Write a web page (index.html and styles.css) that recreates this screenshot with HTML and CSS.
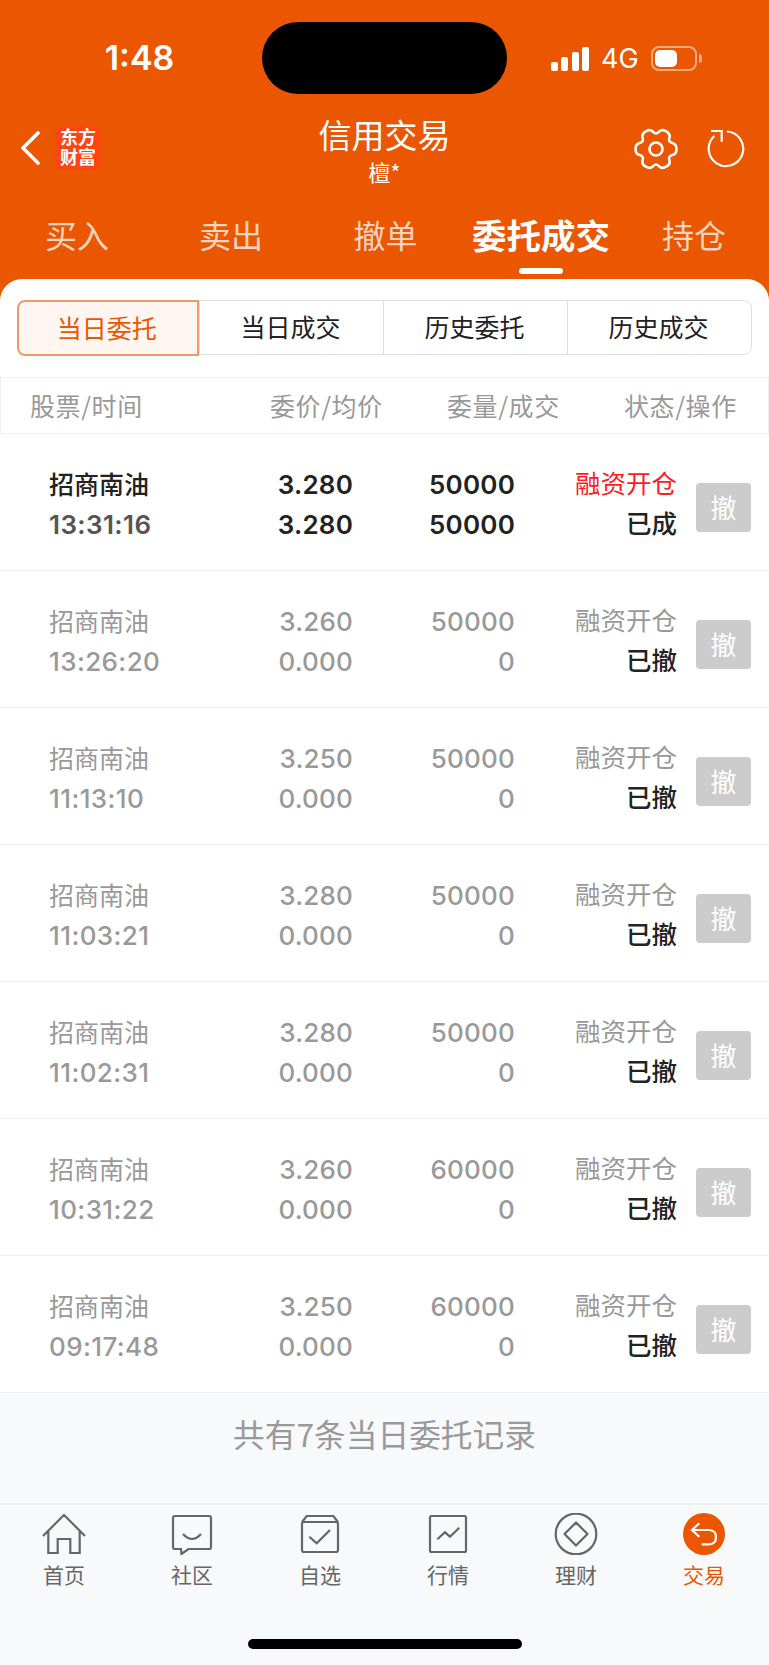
FILE: index.html
```html
<!DOCTYPE html>
<html lang="zh-CN">
<head>
    <meta charset="UTF-8">
    <title>信用交易</title>
    <link rel="stylesheet" href="styles.css">
</head>
<body>
    <div class="top">
        <div class="status">
            <div class="clock">1:48</div>
            <div class="island"></div>
            <div class="status-right">
                <svg class="signal" width="38" height="24" viewBox="0 0 38 24"><rect x="0" y="15" width="7" height="9" rx="2"/><rect x="10" y="10" width="7" height="14" rx="2"/><rect x="21" y="5" width="7" height="19" rx="2"/><rect x="31" y="0" width="7" height="24" rx="2"/></svg>
                <span class="net">4G</span>
                <div class="battery"><div class="battery-fill"></div></div>
                <div class="battery-tip"></div>
            </div>
        </div>

        <div class="titlebar">
            <div class="title-left">
                <svg width="20" height="34" viewBox="0 0 20 34"><path d="M18 2 L3 17 L18 32" fill="none" stroke="#fff" stroke-width="3.6" stroke-linecap="round" stroke-linejoin="round"/></svg>
                <div class="logo"><div>东方</div><div>财富</div></div>
            </div>
            <div class="title-mid">
                <div class="title">信用交易</div>
                <div class="subtitle">檀*</div>
            </div>
            <div class="title-right">
                <svg width="44" height="42" viewBox="-22 -21 44 42" fill="none" stroke="#fff" stroke-width="2.6"><path d="M20.47 0 Q20.47 5.1 16.3 6.05 Q12.12 7 13.39 11.09 Q14.66 15.18 10.24 17.73 Q5.82 20.28 2.91 17.14 Q0 14 -2.91 17.14 Q-5.82 20.28 -10.24 17.73 Q-14.66 15.18 -13.39 11.09 Q-12.12 7 -16.3 6.05 Q-20.47 5.1 -20.47 0 Q-20.47 -5.1 -16.3 -6.05 Q-12.12 -7 -13.39 -11.09 Q-14.66 -15.18 -10.24 -17.73 Q-5.82 -20.28 -2.91 -17.14 Q0 -14 2.91 -17.14 Q5.82 -20.28 10.24 -17.73 Q14.66 -15.18 13.39 -11.09 Q12.12 -7 16.3 -6.05 Q20.47 -5.1 20.47 0 Z"/><circle cx="0" cy="0" r="6.5"/></svg>
                <svg width="40" height="40" viewBox="0 0 40 40" fill="none" stroke="#fff" stroke-width="2.2"><path d="M20 3.5 A17.3 17.3 0 1 1 7.3 8"/><path d="M4 3 H14.7 V13.7"/></svg>
            </div>
        </div>

        <div class="tabs">
            <div class="tab">买入</div>
            <div class="tab">卖出</div>
            <div class="tab">撤单</div>
            <div class="tab active">委托成交</div>
            <div class="tab">持仓</div>
        </div>
    </div>

    <div class="sheet">
        <div class="segments">
            <div class="segment on">当日委托</div>
            <div class="segment">当日成交</div>
            <div class="segment">历史委托</div>
            <div class="segment">历史成交</div>
        </div>

        <div class="table-head">
            <div>股票/时间</div>
            <div>委价/均价</div>
            <div>委量/成交</div>
            <div>状态/操作</div>
        </div>

        <div class="row done">
            <div class="stock"><div class="name">招商南油</div><div class="time">13:31:16</div></div>
            <div class="num"><div>3.280</div><div>3.280</div></div>
            <div class="num"><div>50000</div><div>50000</div></div>
            <div class="state"><div class="kind">融资开仓</div><div class="result">已成</div></div>
            <div class="cancel">撤</div>
        </div>
        <div class="row">
            <div class="stock"><div class="name">招商南油</div><div class="time">13:26:20</div></div>
            <div class="num"><div>3.260</div><div>0.000</div></div>
            <div class="num"><div>50000</div><div>0</div></div>
            <div class="state"><div class="kind">融资开仓</div><div class="result">已撤</div></div>
            <div class="cancel">撤</div>
        </div>
        <div class="row">
            <div class="stock"><div class="name">招商南油</div><div class="time">11:13:10</div></div>
            <div class="num"><div>3.250</div><div>0.000</div></div>
            <div class="num"><div>50000</div><div>0</div></div>
            <div class="state"><div class="kind">融资开仓</div><div class="result">已撤</div></div>
            <div class="cancel">撤</div>
        </div>
        <div class="row">
            <div class="stock"><div class="name">招商南油</div><div class="time">11:03:21</div></div>
            <div class="num"><div>3.280</div><div>0.000</div></div>
            <div class="num"><div>50000</div><div>0</div></div>
            <div class="state"><div class="kind">融资开仓</div><div class="result">已撤</div></div>
            <div class="cancel">撤</div>
        </div>
        <div class="row">
            <div class="stock"><div class="name">招商南油</div><div class="time">11:02:31</div></div>
            <div class="num"><div>3.280</div><div>0.000</div></div>
            <div class="num"><div>50000</div><div>0</div></div>
            <div class="state"><div class="kind">融资开仓</div><div class="result">已撤</div></div>
            <div class="cancel">撤</div>
        </div>
        <div class="row">
            <div class="stock"><div class="name">招商南油</div><div class="time">10:31:22</div></div>
            <div class="num"><div>3.260</div><div>0.000</div></div>
            <div class="num"><div>60000</div><div>0</div></div>
            <div class="state"><div class="kind">融资开仓</div><div class="result">已撤</div></div>
            <div class="cancel">撤</div>
        </div>
        <div class="row">
            <div class="stock"><div class="name">招商南油</div><div class="time">09:17:48</div></div>
            <div class="num"><div>3.250</div><div>0.000</div></div>
            <div class="num"><div>60000</div><div>0</div></div>
            <div class="state"><div class="kind">融资开仓</div><div class="result">已撤</div></div>
            <div class="cancel">撤</div>
        </div>

        <div class="summary">共有7条当日委托记录</div>
    </div>

    <div class="nav">
        <div class="nav-item">
            <svg width="44" height="42" viewBox="0 0 44 42"><path d="M1 23 L22 2 L43 23 M6.3 18 V40 H15.7 V26 H28.3 V40 H37.7 V18"/></svg>
            <span>首页</span>
        </div>
        <div class="nav-item">
            <svg width="44" height="42" viewBox="0 0 44 42"><path d="M5 3 H39 Q41 3 41 5 V34 Q41 36 39 36 H18.5 L11.5 41 L11 36 H5 Q3 36 3 34 V5 Q3 3 5 3 Z"/><path d="M13 21 Q22 31 31 21"/></svg>
            <span>社区</span>
        </div>
        <div class="nav-item">
            <svg width="44" height="42" viewBox="0 0 44 42"><path d="M4 9 L8.7 3 H35.3 L40 9"/><rect x="4" y="9" width="36" height="30" rx="2"/><path d="M11.3 23.7 L18.7 30.3 L32 17"/></svg>
            <span>自选</span>
        </div>
        <div class="nav-item">
            <svg width="44" height="42" viewBox="0 0 44 42"><rect x="4" y="3" width="36" height="36" rx="1.5"/><path d="M11.3 26.3 L19 19.3 L24 23.7 L33.3 14.7"/></svg>
            <span>行情</span>
        </div>
        <div class="nav-item">
            <svg width="44" height="42" viewBox="0 0 44 42"><circle cx="22" cy="21" r="20.3"/><path d="M22 9.5 L33.5 21 L22 32.5 L10.5 21 Z" stroke-linejoin="round"/></svg>
            <span>理财</span>
        </div>
        <div class="nav-item current">
            <svg width="44" height="42" viewBox="0 0 44 42"><circle class="fill" cx="22" cy="21" r="21"/><path class="white" d="M17.3 10.3 L10 17 L17.3 23.7 M10 17 H27 Q34 17.3 34 24 Q34 31.3 27 31.3 H19.7"/></svg>
            <span>交易</span>
        </div>
        <div class="home-bar"></div>
    </div>
</body>
</html>
```

FILE: styles.css
```css
* {
    box-sizing: border-box;
}

body {
    margin: 0;
    width: 769px;
    height: 1665px;
    overflow: hidden;
    background: #f8f9fb;
    font-family: "Noto Sans CJK SC", sans-serif;
    display: flex;
    flex-direction: column;
}

.top {
    background: #eb5600;
    color: #fff;
    height: 299px;
    flex: none;
}

.status {
    height: 110px;
    padding-top: 22px;
    display: grid;
    grid-template-columns: 262px 245px 262px;
}

.clock {
    height: 72px;
    line-height: 72px;
    font-family: Inter, sans-serif;
    font-size: 34px;
    font-weight: 600;
    text-align: center;
    padding-left: 17px;
}

.island {
    height: 72px;
    background: #000;
    border-radius: 36px;
}

.status-right {
    height: 72px;
    padding: 1px 0 0 44px;
    display: flex;
    align-items: center;
}

.signal {
    fill: #fff;
    flex: none;
}

.net {
    font-family: Inter, sans-serif;
    font-size: 27px;
    margin-left: 12px;
    width: 50px;
}

.battery {
    width: 46px;
    height: 25px;
    border: 2px solid rgba(255, 255, 255, 0.5);
    border-radius: 8px;
    padding: 2px;
}

.battery-fill {
    width: 22px;
    height: 17px;
    background: #fff;
    border-radius: 5px;
}

.battery-tip {
    width: 3px;
    height: 9px;
    margin-left: 2px;
    background: rgba(255, 255, 255, 0.5);
    border-radius: 0 3px 3px 0;
}

.titlebar {
    height: 85px;
    display: grid;
    grid-template-columns: 1fr 200px 1fr;
}

.title-left {
    display: flex;
    align-items: center;
    padding: 0 0 10px 20px;
    gap: 15px;
}

.logo {
    width: 46px;
    height: 45px;
    background: #ff4510;
    border-radius: 8px;
    font-size: 18px;
    font-weight: 700;
    line-height: 20px;
    text-align: center;
    padding-top: 1px;
    white-space: nowrap;
}

.title-mid {
    text-align: center;
}

.title {
    font-size: 33px;
    line-height: 42px;
    margin-top: 3px;
}

.subtitle {
    font-size: 22px;
    line-height: 30px;
    margin-top: 1px;
}

.title-right {
    display: flex;
    justify-content: flex-end;
    align-items: flex-start;
    gap: 29px;
    padding: 18px 22px 0 0;
}

.tabs {
    height: 104px;
    display: grid;
    grid-template-columns: 154px 154px 155px 156px 150px;
}

.tab {
    position: relative;
    height: 84px;
    text-align: center;
    font-size: 32px;
    line-height: 78px;
    color: rgba(255, 255, 255, 0.75);
}

.tab.active {
    color: #fff;
    font-size: 34.5px;
    font-weight: 700;
}

.tab.active::after {
    content: "";
    position: absolute;
    left: 50%;
    bottom: 5px;
    width: 44px;
    height: 6px;
    margin-left: -22px;
    background: #fff;
    border-radius: 3px;
}

.sheet {
    background: #fff;
    border-radius: 22px 22px 0 0;
    margin-top: -20px;
    padding-top: 21px;
    height: 1224px;
    flex: none;
    position: relative;
}

.segments {
    margin: 0 17px;
    height: 55px;
    display: grid;
    grid-template-columns: 181px 184px 184px 1fr;
    border: 1.5px solid #dfe0e6;
    border-radius: 8px;
}

.segment {
    text-align: center;
    font-size: 25px;
    line-height: 50px;
    color: #222;
    border-left: 1.5px solid #dfe0e6;
    padding-right: 2px;
}

.segment.on {
    color: #eb5600;
    background: #fff6f2;
    border: 2px solid #f29a66;
    border-radius: 8px 0 0 8px;
    margin: -1.5px 0 -1.5px -1.5px;
}

.table-head {
    margin-top: 22px;
    height: 57px;
    border: 1px solid #f0f0f2;
    padding: 0 29px;
    display: grid;
    grid-template-columns: 240px 177px 177px 1fr;
    font-size: 25px;
    line-height: 55px;
    color: #999;
    white-space: nowrap;
    letter-spacing: 0.6px;
}

.row {
    height: 137px;
    padding: 0 18px 0 49px;
    border-bottom: 1px solid #eeeef0;
    display: grid;
    grid-template-columns: 210px 94px 162px 162px 1fr;
    align-items: center;
    color: #999;
    font-size: 25px;
    line-height: 39px;
}

.name {
    white-space: nowrap;
}

.stock {
    padding-top: 3px;
}

.time {
    margin-top: 2px;
    letter-spacing: 0.4px;
}

.time,
.num {
    font-family: Inter, sans-serif;
    font-weight: 500;
    font-size: 26px;
}

.num {
    text-align: right;
    line-height: 40px;
    padding-top: 5px;
    letter-spacing: 0.2px;
}

.state {
    text-align: right;
    white-space: nowrap;
    font-size: 25.5px;
    line-height: 40px;
}

.result {
    color: #222;
    font-weight: 500;
}

.cancel {
    justify-self: end;
    width: 55px;
    height: 49px;
    margin-top: 10px;
    background: #ccc;
    color: #fff;
    border-radius: 4px;
    text-align: center;
    line-height: 47px;
    font-size: 26px;
}

.row.done .name,
.row.done .num {
    color: #222;
}

.row.done .name {
    font-weight: 500;
}

.row.done .num {
    font-weight: 600;
}

.row.done .time {
    color: #555;
    font-weight: 600;
}

.row.done .kind {
    color: #fb1c24;
}

.summary {
    height: 110px;
    background: #f8f9fb;
    text-align: center;
    font-size: 31.7px;
    line-height: 80px;
    color: #999;
}

.nav {
    height: 162px;
    flex: none;
    border-top: 2px solid #eeeef0;
    display: grid;
    grid-template-columns: repeat(6, 128px);
    padding-top: 8px;
    position: relative;
}

.nav-item {
    display: flex;
    flex-direction: column;
    align-items: center;
    font-size: 21px;
    line-height: 30px;
    color: #666;
}

.nav-item svg {
    fill: none;
    stroke: #666;
    stroke-width: 2.2;
    margin-bottom: 4px;
}

.nav-item .fill {
    fill: #eb5600;
    stroke: none;
}

.nav-item .white {
    stroke: #fff;
}

.nav-item.current {
    color: #eb5600;
}

.home-bar {
    position: absolute;
    left: 248px;
    top: 134px;
    width: 274px;
    height: 10px;
    background: #000;
    border-radius: 5px;
}
```
